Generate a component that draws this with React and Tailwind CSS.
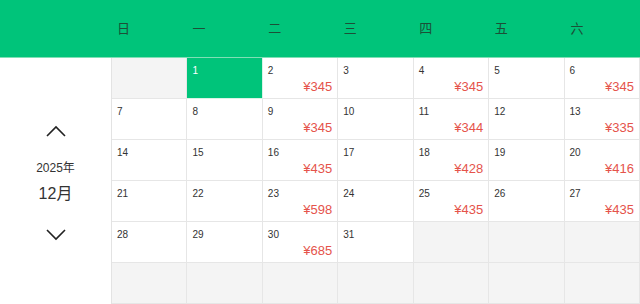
import React from 'react';

const WEEK = ['日', '一', '二', '三', '四', '五', '六'];

const PRICES = {
  2: 345, 4: 345, 6: 345,
  9: 345, 11: 344, 13: 335,
  16: 435, 18: 428, 20: 416,
  23: 598, 25: 435, 27: 435,
  30: 685,
};

// Dec 2025 starts on Monday
const cells = [];
cells.push(null);
for (let d = 1; d <= 31; d++) cells.push(d);
while (cells.length < 42) cells.push(null);

function Chevron({ up }) {
  return (
    <svg width="20" height="12" viewBox="0 0 20 12" fill="none">
      <polyline
        points={up ? '1,11 10,2 19,11' : '1,1 10,10 19,1'}
        stroke="#222"
        strokeWidth="1.6"
        strokeLinejoin="miter"
      />
    </svg>
  );
}

export default function App() {
  return (
    <div
      className="w-[640px] h-[304px] overflow-hidden bg-white"
      style={{ fontFamily: '"Liberation Sans", "Noto Sans CJK SC", sans-serif' }}
    >
      {/* header */}
      <div className="flex h-[58px] bg-[#00c47a] border-b border-[#80dfb5]">
        <div className="w-[111px] shrink-0" />
        <div className="flex-1 grid grid-cols-7">
          {WEEK.map(w => (
            <div key={w} className="flex items-center pl-[6px] text-[13px] text-[#1c4f37]">
              {w}
            </div>
          ))}
        </div>
      </div>

      <div className="flex">
        {/* month switcher */}
        <div className="w-[111px] shrink-0 flex flex-col items-center pt-[67px] text-[#333]">
          <Chevron up />
          <div className="mt-[23px] text-[12px] leading-[16px]">2025年</div>
          <div className="mt-[8px] text-[16px] leading-[20px]">12月</div>
          <div className="mt-[25px]">
            <Chevron />
          </div>
        </div>

        {/* days */}
        <div className="flex-1 grid grid-cols-7 border-l border-[#e3e3e3]">
          {cells.map((d, i) => {
            if (d === null) {
              return (
                <div key={i} className="h-[41px] bg-[#f4f4f4] border-r border-b border-[#e6e6e6]" />
              );
            }
            const today = d === 1;
            return (
              <div
                key={i}
                className={
                  'h-[41px] flex flex-col border-r border-b ' +
                  (today ? 'bg-[#00c47a] border-[#d9f3e6]' : 'bg-white border-[#e6e6e6]')
                }
              >
                <div className={'pl-[5px] pt-[7px] text-[10px] leading-[12px] ' + (today ? 'text-white' : 'text-[#333]')}>
                  {d}
                </div>
                {PRICES[d] && (
                  <div className="mt-[2px] pr-[5px] text-right text-[13px] leading-[15px] text-[#e5534b]">
                    ¥{PRICES[d]}
                  </div>
                )}
              </div>
            );
          })}
        </div>
      </div>
    </div>
  );
}
